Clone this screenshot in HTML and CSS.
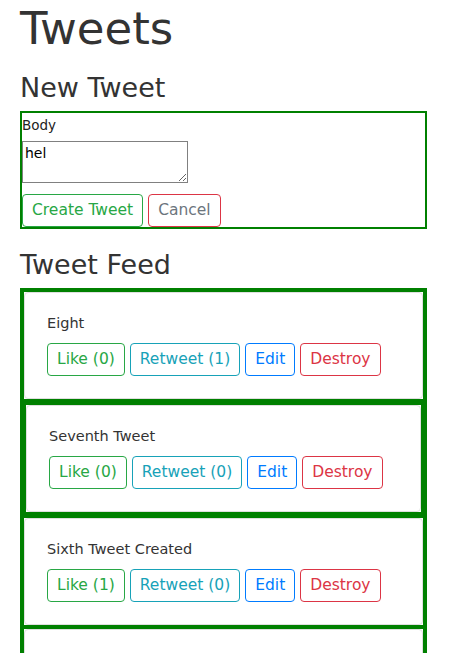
FILE: index.html
```html
<!DOCTYPE html>
<html lang="en">
<head>
<meta charset="utf-8">
<title>Tweets</title>
<link rel="stylesheet" href="styles.css">
</head>
<body>
<div class="page">
  <h1 class="title">Tweets</h1>

  <h2 class="section-title section-title--first">New Tweet</h2>
  <form class="tweet-form">
    <label class="field-label" for="body">Body</label>
    <textarea id="body" class="field-input">hel</textarea>
    <div class="actions">
      <button type="button" class="btn btn-success">Create Tweet</button>
      <button type="button" class="btn btn-cancel">Cancel</button>
    </div>
  </form>

  <h2 class="section-title">Tweet Feed</h2>
  <div class="feed">
    <div class="tweet-wrap">
      <div class="card">
        <p class="card-text">Eight</p>
        <div class="actions">
          <button type="button" class="btn btn-success">Like (0)</button>
          <button type="button" class="btn btn-info">Retweet (1)</button>
          <button type="button" class="btn btn-primary">Edit</button>
          <button type="button" class="btn btn-danger">Destroy</button>
        </div>
      </div>
    </div>
    <div class="tweet-wrap tweet-wrap--nested">
      <div class="card">
        <p class="card-text">Seventh Tweet</p>
        <div class="actions">
          <button type="button" class="btn btn-success">Like (0)</button>
          <button type="button" class="btn btn-info">Retweet (0)</button>
          <button type="button" class="btn btn-primary">Edit</button>
          <button type="button" class="btn btn-danger">Destroy</button>
        </div>
      </div>
    </div>
    <div class="tweet-wrap">
      <div class="card">
        <p class="card-text">Sixth Tweet Created</p>
        <div class="actions">
          <button type="button" class="btn btn-success">Like (1)</button>
          <button type="button" class="btn btn-info">Retweet (0)</button>
          <button type="button" class="btn btn-primary">Edit</button>
          <button type="button" class="btn btn-danger">Destroy</button>
        </div>
      </div>
    </div>
    <div class="tweet-wrap">
      <div class="card card--empty"></div>
    </div>
  </div>
</div>
</body>
</html>
```

FILE: styles.css
```css
* {
  box-sizing: border-box;
}

html, body {
  margin: 0;
  padding: 0;
  background: #fff;
}

body {
  font-family: "DejaVu Sans", Verdana, sans-serif;
  color: #333;
  overflow: hidden;
}

.page {
  width: 407px;
  margin-left: 20px;
}

.title {
  margin: 3px 0 0;
  font-size: 45px;
  line-height: 52px;
  font-weight: 400;
  color: #333;
}

.section-title {
  margin: 20px 0 8px;
  font-size: 27px;
  line-height: 31px;
  font-weight: 400;
  color: #333;
}

.section-title--first {
  margin-top: 17px;
}

.tweet-form {
  border: 2px solid #008000;
  margin: 0;
}

.field-label {
  display: block;
  margin-top: 2px;
  font-size: 13.5px;
  line-height: 20px;
  color: #222;
}

.field-input {
  display: block;
  margin: 6px 0 0;
  width: 166px;
  height: 42px;
  padding: 3px 2px 2px;
  border: 1px solid #808080;
  font-family: "DejaVu Sans", Verdana, sans-serif;
  font-size: 14px;
  line-height: 17px;
  color: #000;
  background: #fff;
}

.tweet-form .actions {
  margin-top: 11px;
}

.actions {
  display: flex;
  gap: 5px;
}

.btn {
  font-family: "DejaVu Sans", Verdana, sans-serif;
  font-size: 15.5px;
  line-height: 23px;
  padding: 4px 9px;
  border: 1px solid;
  border-radius: 4px;
  background: #fff;
  white-space: nowrap;
  margin: 0;
}

.btn-success {
  color: #28a745;
  border-color: #28a745;
}

.btn-info {
  color: #17a2b8;
  border-color: #17a2b8;
}

.btn-primary {
  color: #007bff;
  border-color: #007bff;
}

.btn-danger {
  color: #dc3545;
  border-color: #dc3545;
}

.btn-cancel {
  color: #6c757d;
  border-color: #dc3545;
}

.feed {
  border: 4px solid #008000;
  border-bottom: 0;
  background: #fff;
}

.tweet-wrap {
  border-bottom: 4px solid #008000;
  background: #fff;
}

.tweet-wrap--nested {
  border: 2px solid #008000;
  border-bottom-width: 6px;
}

.card {
  border: 1px solid #dfdfdf;
  border-radius: 4px;
  padding: 20px 22px 22px;
  background: #fff;
}

.card--empty {
  height: 107px;
}

.card-text {
  margin: 0 0 9px;
  font-size: 14.5px;
  line-height: 21px;
  color: #333;
}
```
